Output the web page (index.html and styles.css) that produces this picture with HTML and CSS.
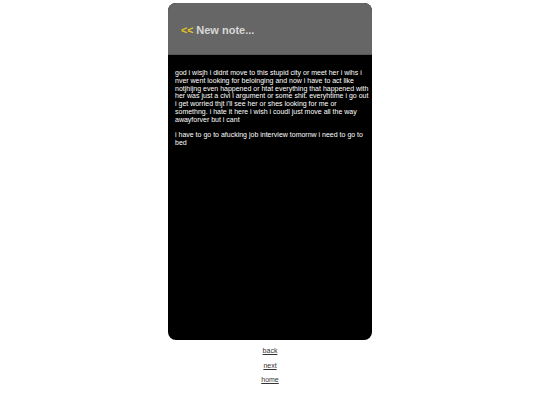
FILE: index.html
```html
<!DOCTYPE html>
<html>
<head>
<meta charset="utf-8">
<link rel="stylesheet" href="styles.css">
</head>
<body>
<div class="phone">
  <div class="header">
    <span class="back-arrow">&lt;&lt;</span> <span class="title">New note...</span>
  </div>
  <div class="note">
    <p>god i wisjh i didnt move to this stupid city or meet her i wihs i nver went looking for beloinging and now i have to act like notjhijng even happened or htat everything that happened with her was just a civi l argument or some shit. everyhtime i go out i get worried thjt i'll see her or shes looking for me or somethng. i hate it here i wish i coudl just move all the way awayforver but i cant</p>
    <p>i have to go to afucking job interview tomornw i need to go to bed</p>
  </div>
</div>
<div class="links">
  <a href="#">back</a>
  <a href="#">next</a>
  <a href="#">home</a>
</div>
</body>
</html>
```
FILE: styles.css
```css
html, body {
  margin: 0;
  padding: 0;
  background: #fff;
}
body {
  font-family: "Liberation Sans", Arial, sans-serif;
  padding-top: 3px;
}
.phone {
  width: 204px;
  height: 337px;
  margin: 0 auto;
  border-radius: 8px;
  overflow: hidden;
  background: #000;
  display: flex;
  flex-direction: column;
}
.header {
  height: 52px;
  background: #666;
  display: flex;
  align-items: center;
  padding-left: 13px;
  padding-top: 2px;
  box-sizing: border-box;
  font-weight: bold;
  font-size: 11px;
  border-bottom: 1px solid #555;
}
.back-arrow {
  color: #e8c81a;
  margin-right: 3px;
  font-size: 10.5px;
}
.title {
  color: #d8d8d8;
}
.note {
  color: #fff;
  font-size: 7px;
  line-height: 7.8px;
  padding: 14px 3px 0 7px;
}
.note p {
  margin: 0 0 7.8px 0;
}
.links {
  display: flex;
  flex-direction: column;
  align-items: center;
  padding-top: 6px;
  gap: 4.5px;
}
.links a {
  color: #333;
  font-size: 7px;
  line-height: 10px;
}
```
